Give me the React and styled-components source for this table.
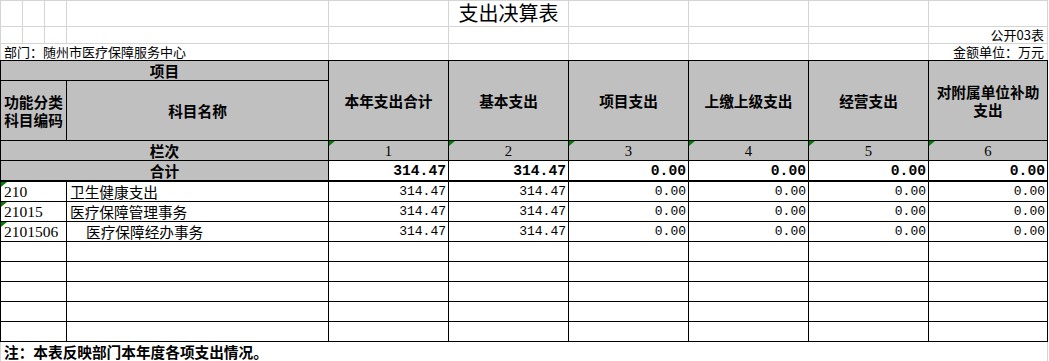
import styled, { createGlobalStyle } from "styled-components";

const GlobalStyle = createGlobalStyle`
  html, body {
    margin: 0;
    padding: 0;
    background: #ffffff;
  }
  body {
    font-family: "Noto Sans CJK SC", "Liberation Sans", sans-serif;
    color: #000;
  }
`;

const LIGHT = "#d4d4d4";
const GREY = "#c0c0c0";
const CJK = `"Noto Sans CJK SC", "Liberation Sans", sans-serif`;
const MONO = `"Liberation Mono", "Noto Sans CJK SC", monospace`;
const SERIF = `"Liberation Serif", "Noto Sans CJK SC", serif`;

const Sheet = styled.div`
  width: 1048px;
  display: flex;
  flex-direction: column;
`;

const TopGrid = styled.div`
  display: grid;
  grid-template-columns: 22px 22px 22px 262px 120px 120px 120px 120px 120px 119px;
  grid-template-rows: 26px 17px 16px;
  border-top: 1px solid ${LIGHT};
  border-left: 1px solid ${LIGHT};
  width: 1048px;
  box-sizing: border-box;
`;

const TopCell = styled.div`
  box-sizing: border-box;
  border-right: 1px solid ${LIGHT};
  border-bottom: ${(p) => (p.$last ? "none" : `1px solid ${LIGHT}`)};
  grid-column: span ${(p) => p.$span || 1};
  display: flex;
  align-items: flex-end;
  justify-content: ${(p) =>
    p.$align === "right" ? "flex-end" : p.$align === "center" ? "center" : "flex-start"};
  padding: 0 3px;
  font-size: 13px;
  line-height: 16px;
  white-space: nowrap;
  overflow: visible;
`;

const Title = styled.span`
  font-size: 20px;
  line-height: 24px;
  padding-bottom: 1px;
`;

const Table = styled.div`
  display: grid;
  grid-template-columns: 66px 262px 120px 120px 120px 120px 120px 119px;
  grid-template-rows: 20px 60px 20px 21px repeat(8, 20px);
  border-top: 1px solid #000;
  border-left: 1px solid #000;
  width: 1048px;
  box-sizing: border-box;
`;

const Cell = styled.div`
  position: relative;
  box-sizing: border-box;
  border-right: 1px solid #000;
  border-bottom: ${(p) => (p.$thick ? "2px" : "1px")} solid #000;
  background: ${(p) => (p.$grey ? GREY : "#fff")};
  grid-column: span ${(p) => p.$span || 1};
  grid-row: span ${(p) => p.$rows || 1};
  display: flex;
  align-items: center;
  justify-content: ${(p) =>
    p.$align === "right" ? "flex-end" : p.$align === "left" ? "flex-start" : "center"};
  text-align: ${(p) => p.$align || "center"};
  padding: 0 ${(p) => (p.$align === "right" ? "2px" : "3px")} 0
    ${(p) => (p.$indent ? "19px" : "3px")};
  font-family: ${(p) => (p.$font === "mono" ? MONO : p.$font === "serif" ? SERIF : CJK)};
  font-size: ${(p) => p.$size || 14.67}px;
  font-weight: ${(p) => (p.$bold ? 700 : 400)};
  line-height: 18px;
  white-space: pre-line;

  &::before {
    content: "";
    display: ${(p) => (p.$flag ? "block" : "none")};
    position: absolute;
    left: 0;
    top: 0;
    width: 0;
    height: 0;
    border-top: 5px solid #008000;
    border-right: 6px solid transparent;
  }
`;

const Note = styled.div`
  box-sizing: border-box;
  height: 20px;
  border-left: 1px solid ${LIGHT};
  border-right: 1px solid ${LIGHT};
  border-bottom: 1px solid ${LIGHT};
  padding: 0 3px;
  display: flex;
  align-items: center;
  font-size: 14.67px;
  font-weight: 700;
  line-height: 18px;
`;

const heads = ["本年支出合计", "基本支出", "项目支出", "上缴上级支出", "经营支出", "对附属单位补助\n支出"];
const totals = ["314.47", "314.47", "0.00", "0.00", "0.00", "0.00"];
const blank = ["", "", "", "", "", ""];

const rows = [
  { code: "210", name: "卫生健康支出", vals: totals },
  { code: "21015", name: "医疗保障管理事务", vals: totals },
  { code: "2101506", name: "医疗保障经办事务", indent: true, vals: totals },
  { code: "", name: "", vals: blank },
  { code: "", name: "", vals: blank },
  { code: "", name: "", vals: blank },
  { code: "", name: "", vals: blank },
  { code: "", name: "", vals: blank },
];

function Row({ row }) {
  return (
    <>
      <Cell $align="left" $font="serif" $size={15.5} $flag={!!row.code}>
        {row.code}
      </Cell>
      <Cell $align="left" $indent={row.indent}>
        {row.name}
      </Cell>
      {row.vals.map((v, i) => (
        <Cell key={i} $align="right" $font="mono" $size={13}>
          {v}
        </Cell>
      ))}
    </>
  );
}

export default function App() {
  return (
    <>
      <GlobalStyle />
      <Sheet>
        <TopGrid>
          <TopCell />
          <TopCell />
          <TopCell />
          <TopCell />
          <TopCell />
          <TopCell $align="center">
            <Title>支出决算表</Title>
          </TopCell>
          <TopCell />
          <TopCell />
          <TopCell />
          <TopCell />

          <TopCell />
          <TopCell />
          <TopCell />
          <TopCell />
          <TopCell />
          <TopCell />
          <TopCell />
          <TopCell />
          <TopCell />
          <TopCell $align="right">公开03表</TopCell>

          <TopCell $span={4} $last>部门：随州市医疗保障服务中心</TopCell>
          <TopCell $last />
          <TopCell $last />
          <TopCell $last />
          <TopCell $last />
          <TopCell $last />
          <TopCell $last $align="right">金额单位：万元</TopCell>
        </TopGrid>

        <Table>
          <Cell $grey $span={2} $bold>项目</Cell>
          {heads.map((h) => (
            <Cell key={h} $grey $rows={2} $bold>
              {h}
            </Cell>
          ))}
          <Cell $grey $bold>{"功能分类\n科目编码"}</Cell>
          <Cell $grey $bold>科目名称</Cell>

          <Cell $grey $span={2} $bold>栏次</Cell>
          {[1, 2, 3, 4, 5, 6].map((n) => (
            <Cell key={n} $grey $flag $font="serif">
              {n}
            </Cell>
          ))}

          <Cell $grey $span={2} $bold $thick>合计</Cell>
          {totals.map((v, i) => (
            <Cell key={i} $align="right" $font="mono" $bold $thick>
              {v}
            </Cell>
          ))}

          {rows.map((r, i) => (
            <Row key={i} row={r} />
          ))}
        </Table>

        <Note>注：本表反映部门本年度各项支出情况。</Note>
      </Sheet>
    </>
  );
}
